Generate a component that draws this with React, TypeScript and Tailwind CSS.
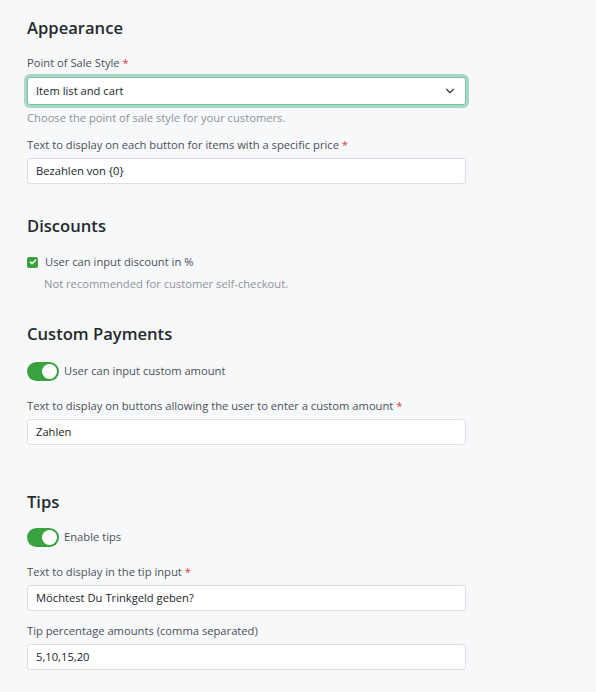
import { ChevronDown, Check } from "lucide-react";

const font = { fontFamily: '"Open Sans", "Noto Sans", sans-serif' };

function Label({ text, required }: { text: string; required?: boolean }) {
    return (
        <div className="text-[11.2px] leading-[18px] text-[#4b5157]">
            {text}
            {required && <span className="text-[#d9383a]"> *</span>}
        </div>
    );
}

function TextInput({ value }: { value: string }) {
    return (
        <div className="mt-[4px] h-[26px] w-[439px] flex items-center px-[8px] bg-white border border-[#dcdfe3] rounded-[3px] text-[11.2px] text-[#212529]">
            {value}
        </div>
    );
}

function Toggle({ label }: { label: string }) {
    return (
        <div className="flex items-center gap-[5px]">
            <div className="w-[32px] h-[19px] rounded-full bg-[#3aa13f] flex items-center justify-end px-[2px]">
                <div className="w-[15px] h-[15px] rounded-full bg-white" />
            </div>
            <span className="text-[11.2px] text-[#4b5157]">{label}</span>
        </div>
    );
}

function Heading({ children }: { children: string }) {
    return <h2 className="text-[16.6px] leading-[24px] font-semibold text-[#262a2e]">{children}</h2>;
}

export default function App() {
    return (
        <div style={font} className="min-h-[692px] w-[596px] bg-[#f7f8fa] px-[27px] pt-[16px]">
            {/* Appearance */}
            <Heading>Appearance</Heading>
            <div className="mt-[14px]">
                <Label text="Point of Sale Style" required />
            </div>
            <div className="mt-[5px] h-[28px] w-[439px] flex items-center justify-between px-[8px] bg-white border border-[#7fbfa5] rounded-[3px] ring-[3px] ring-[#a9d8c4] text-[11.2px] text-[#212529]">
                <span>Item list and cart</span>
                <ChevronDown className="w-[14px] h-[14px] text-[#343a40]" strokeWidth={2} />
            </div>
            <div className="mt-[4px] text-[11.2px] leading-[18px] text-[#8d9399]">
                Choose the point of sale style for your customers.
            </div>
            <div className="mt-[9px]">
                <Label text="Text to display on each button for items with a specific price" required />
            </div>
            <TextInput value="Bezahlen von {0}" />

            {/* Discounts */}
            <div className="mt-[30px]">
                <Heading>Discounts</Heading>
            </div>
            <div className="mt-[15px] flex items-center gap-[7px]">
                <div className="w-[11px] h-[11px] rounded-[2px] bg-[#3aa13f] flex items-center justify-center">
                    <Check className="w-[8px] h-[8px] text-white" strokeWidth={4} />
                </div>
                <span className="text-[11.2px] leading-[18px] text-[#4b5157]">User can input discount in %</span>
            </div>
            <div className="mt-[4px] pl-[17px] text-[11.2px] leading-[18px] text-[#8d9399]">
                Not recommended for customer self-checkout.
            </div>

            {/* Custom Payments */}
            <div className="mt-[29px]">
                <Heading>Custom Payments</Heading>
            </div>
            <div className="mt-[16px]">
                <Toggle label="User can input custom amount" />
            </div>
            <div className="mt-[16px]">
                <Label text="Text to display on buttons allowing the user to enter a custom amount" required />
            </div>
            <TextInput value="Zahlen" />

            {/* Tips */}
            <div className="mt-[45px]">
                <Heading>Tips</Heading>
            </div>
            <div className="mt-[14px]">
                <Toggle label="Enable tips" />
            </div>
            <div className="mt-[16px]">
                <Label text="Text to display in the tip input" required />
            </div>
            <TextInput value="Möchtest Du Trinkgeld geben?" />
            <div className="mt-[11px]">
                <Label text="Tip percentage amounts (comma separated)" />
            </div>
            <TextInput value="5,10,15,20" />
        </div>
    );
}
